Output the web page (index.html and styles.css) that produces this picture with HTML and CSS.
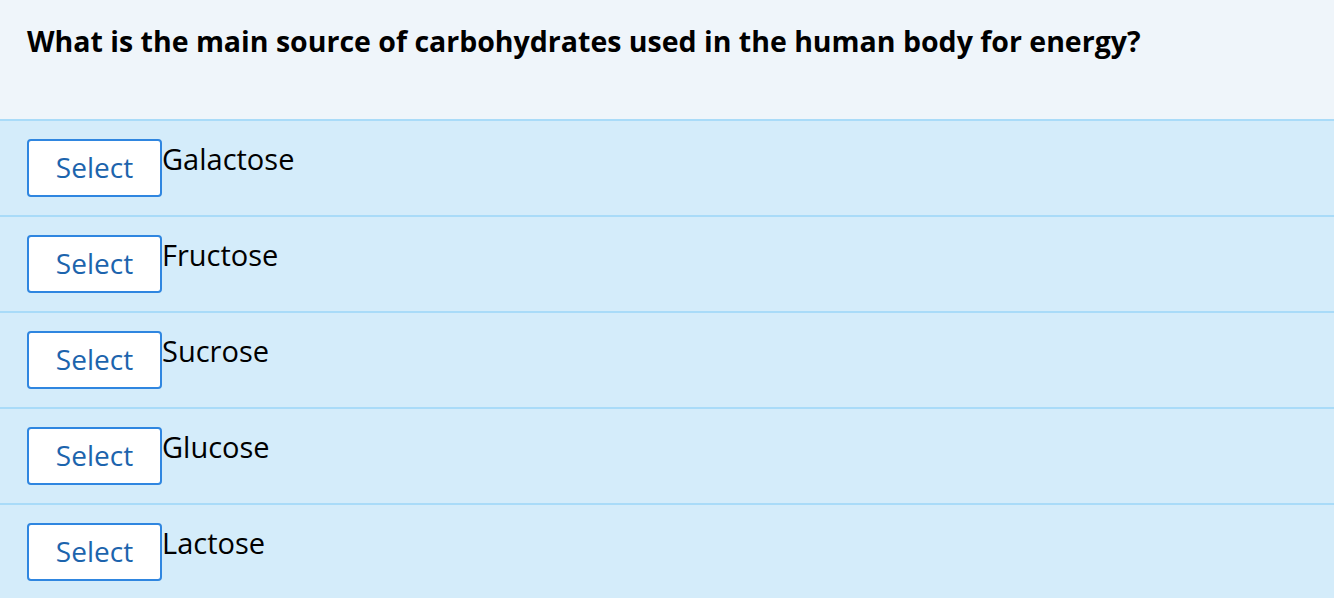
FILE: index.html
```html
<!DOCTYPE html>
<html>
<head>
<meta charset="utf-8">
<link rel="stylesheet" href="styles.css">
</head>
<body>
<div class="quiz">
  <div class="question">What is the main source of carbohydrates used in the human body for energy?</div>
  <div class="option"><button class="select">Select</button><span class="label">Galactose</span></div>
  <div class="option"><button class="select">Select</button><span class="label">Fructose</span></div>
  <div class="option"><button class="select">Select</button><span class="label">Sucrose</span></div>
  <div class="option"><button class="select">Select</button><span class="label">Glucose</span></div>
  <div class="option"><button class="select">Select</button><span class="label">Lactose</span></div>
</div>
</body>
</html>
```
FILE: styles.css
```css
html, body {
  margin: 0;
  padding: 0;
  background: #d4ecfa;
  font-family: "Open Sans", "Noto Sans", sans-serif;
}
.quiz {
  display: flex;
  flex-direction: column;
}
.question {
  background: #eff5fa;
  height: 121px;
  box-sizing: border-box;
  padding: 22px 27px 0;
  font-size: 28.5px;
  font-weight: 700;
  color: #000;
  border-bottom: 2px solid #a9dbf8;
}
.option {
  display: flex;
  align-items: flex-start;
  padding: 18px 27px 18px;
  height: 96px;
  box-sizing: border-box;
  border-bottom: 2px solid #a9dbf8;
  background: #d4ecfa;
}
.select {
  width: 135px;
  height: 58px;
  box-sizing: border-box;
  background: #fff;
  border: 2px solid #2f86e0;
  border-radius: 4px;
  color: #1c64ad;
  font-family: "Open Sans", "Noto Sans", sans-serif;
  font-size: 28px;
  line-height: 38px;
  padding: 0 0 2px;
  margin: 0;
}
.label {
  font-size: 29px;
  color: #000;
  line-height: 1.36;
}
```
